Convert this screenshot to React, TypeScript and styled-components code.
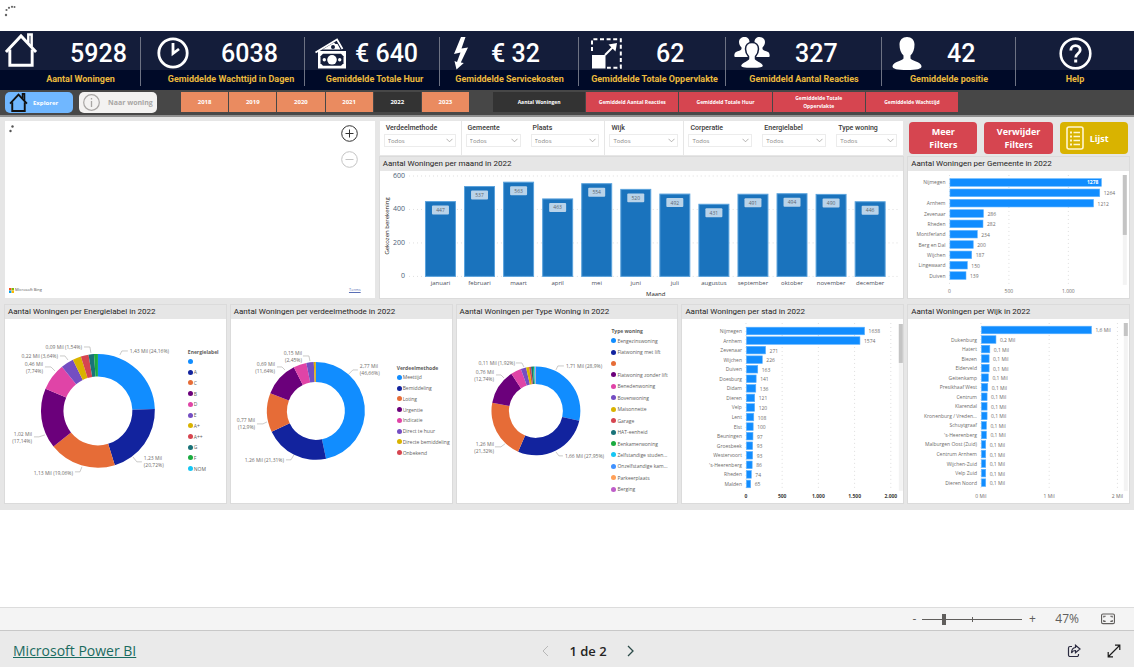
import React from 'react';
import styled, { createGlobalStyle } from 'styled-components';

const sans = '"Open Sans", "Noto Sans", sans-serif';
const din = 'Roboto, "Liberation Sans", sans-serif';

const GlobalStyle = createGlobalStyle`
  *, *::before, *::after { box-sizing: border-box; }
  body { margin: 0; background: #ffffff; font-family: ${sans}; color: #252423; }
  button, select, input { font: inherit; color: inherit; margin: 0; padding: 0; border: 0; }
  button { cursor: pointer; }
  h2, h3, p, ul { margin: 0; padding: 0; font-weight: 400; }
  ul { list-style: none; }
`;

/* ---------- page frame ---------- */

const Page = styled.div`
  min-height: 100vh;
  display: flex;
  flex-direction: column;
`;

const LoadingStrip = styled.div`
  height: 31px;
  padding: 2px 4px;
`;

const Blank = styled.div`
  flex: 1;
  min-height: 20px;
`;

/* ---------- KPI header ---------- */

const KpiBar = styled.header`
  display: grid;
  grid-template-columns: 141fr 164fr 135fr 139fr 147fr 156fr 134fr 118fr;
  height: 59px;
  background: linear-gradient(#141d3a 0 39px, #000a28 39px);
`;

const KpiCell = styled.div<{ $divider: boolean }>`
  position: relative;
  min-width: 0;
  padding-top: 5px;
  &::after {
    content: '';
    display: ${p => (p.$divider ? 'block' : 'none')};
    position: absolute;
    right: 0;
    top: 6px;
    width: 1px;
    height: 49px;
    background: #6d7283;
  }
`;

const KpiTop = styled.div<{ $lead: number; $gap: number; $raise?: boolean }>`
  display: flex;
  align-items: center;
  height: 36px;
  padding-left: ${p => p.$lead}px;
  gap: ${p => p.$gap}px;
  svg { flex: none; display: block; margin-bottom: ${p => (p.$raise ? 8 : 2)}px; }
`;

const KpiValue = styled.span`
  font: 500 25px/36px ${din};
  color: #ffffff;
  white-space: nowrap;
`;

const KpiLabel = styled.p<{ $indent: number }>`
  padding-left: ${p => p.$indent}px;
  font: 700 9px/14px ${din};
  color: #ecba3e;
  text-align: center;
  white-space: nowrap;
`;

/* ---------- toolbar ---------- */

const Toolbar = styled.nav`
  display: grid;
  grid-template-columns: 68fr 78fr 306fr 483fr 165fr;
  column-gap: 6px;
  height: 27px;
  padding: 2px 5px 3px;
  background: #474747;
  border-bottom: 2px solid #8f8f8f;
`;

const NavButton = styled.button<{ $tone: 'blue' | 'light' }>`
  display: flex;
  align-items: center;
  gap: ${p => (p.$tone === 'blue' ? 5 : 8)}px;
  height: 21px;
  padding-left: 4px;
  border-radius: 5px;
  background: ${p => (p.$tone === 'blue' ? '#70b7ff' : '#f3f2f1')};
  color: ${p => (p.$tone === 'blue' ? '#ffffff' : '#a8a6a4')};
  font-size: ${p => (p.$tone === 'blue' ? 6 : 7)}px;
  font-weight: 700;
  white-space: nowrap;
  svg { flex: none; }
`;

const TileGroup = styled.div`
  display: flex;
  gap: 1px;
  height: 20px;
  padding-left: 18px;
`;

const Tile = styled.button<{ $tone: 'orange' | 'red'; $active?: boolean }>`
  flex: 1 1 0;
  min-width: 0;
  padding: 0 8px;
  background: ${p => (p.$active ? '#333333' : p.$tone === 'orange' ? '#ea8b60' : '#d64550')};
  color: #ffffff;
  font-size: ${p => (p.$tone === 'orange' ? 6 : 5)}px;
  line-height: 8px;
  font-weight: 700;
`;

/* ---------- report grid ---------- */

const Report = styled.main`
  background: #e6e6e6;
  padding: 4px 5px 7px;
`;

const UpperRow = styled.div`
  display: grid;
  grid-template-columns: 370fr 524fr 221fr;
  gap: 5px;
  margin-bottom: 7px;
`;

const LowerRow = styled.div`
  display: grid;
  grid-template-columns: repeat(5, minmax(0, 1fr));
  gap: 5px;
`;

const Stack = styled.div`
  display: flex;
  flex-direction: column;
  gap: 2px;
  min-width: 0;
`;

const Panel = styled.section`
  min-width: 0;
  box-shadow: 0 0 0 1px #dbdbdb;
`;

const PanelTitle = styled.h3`
  padding-left: 3px;
  font: 400 8px/14px ${din};
  color: #252423;
  white-space: nowrap;
`;

const PanelBody = styled.div`
  background: #ffffff;
  svg { display: block; width: 100%; height: auto; }
`;

/* ---------- map ---------- */

const MapPanel = styled.section`
  display: flex;
  flex-direction: column;
  justify-content: space-between;
  min-height: 177px;
  padding: 4px 14px 4px 4px;
  background: #ffffff;
`;

const MapLine = styled.div`
  display: flex;
  justify-content: space-between;
  align-items: flex-start;
  font-size: 4px;
  line-height: 8px;
  color: #555555;
`;

const MapControls = styled.div`
  display: flex;
  flex-direction: column;
  gap: 9px;
  margin-right: 3px;
`;

const RoundButton = styled.button`
  display: block;
  width: 17px;
  height: 17px;
  background: none;
  svg { display: block; }
`;

const BingMark = styled.span`
  display: flex;
  align-items: center;
  gap: 1px;
`;

const TermsLink = styled.a`
  color: #5a6fb5;
`;

/* ---------- slicers ---------- */

const Slicers = styled.div`
  display: grid;
  grid-template-columns: 82fr 65fr 79fr 79fr 74fr 74fr 71fr;
  height: 34px;
  background: #ffffff;
`;

const Slicer = styled.label<{ $edge?: boolean }>`
  position: relative;
  display: block;
  min-width: 0;
  padding: 2px 5px 0 4px;
  border-right: 1px solid ${p => (p.$edge ? '#e6e6e6' : '#ffffff')};
  font: 500 7px/10px ${din};
  color: #3b3a39;
  white-space: nowrap;
  span { display: block; padding-left: 2px; }
`;

const SlicerSelect = styled.select`
  display: block;
  width: 100%;
  height: 13px;
  margin-top: 1px;
  padding-left: 3px;
  appearance: none;
  border: 1px solid #ececec;
  background: #ffffff;
  font-family: ${sans};
  font-size: 6px;
  line-height: 10px;
  color: #8a8886;
`;

const SlicerChevron = styled.svg`
  position: absolute;
  right: 8px;
  top: 17px;
  pointer-events: none;
`;

/* ---------- action buttons ---------- */

const Actions = styled.div`
  display: grid;
  grid-template-columns: repeat(3, 1fr);
  gap: 7px;
  height: 34px;
  padding: 1px;
`;

const ActionButton = styled.button<{ $gold?: boolean }>`
  display: flex;
  align-items: center;
  justify-content: ${p => (p.$gold ? 'flex-start' : 'center')};
  gap: 6px;
  padding-left: ${p => (p.$gold ? 6 : 0)}px;
  border-radius: 4px;
  background: ${p => (p.$gold ? '#d9b300' : '#d64550')};
  color: #ffffff;
  font-size: 9px;
  line-height: 13px;
  font-weight: 700;
`;

/* ---------- donut layout ---------- */

const DonutBody = styled.div<{ $plot: number }>`
  display: grid;
  grid-template-columns: ${p => p.$plot}fr ${p => 221 - p.$plot}fr;
  align-items: center;
  min-height: 184px;
  background: #ffffff;
  > svg { display: block; width: 100%; height: auto; }
`;

const LegendTitle = styled.p`
  font-size: 5px;
  line-height: 8px;
  font-weight: 700;
  color: #605e5c;
  white-space: nowrap;
`;

const LegendList = styled.ul<{ $height: number }>`
  display: flex;
  flex-direction: column;
  height: ${p => p.$height}px;
`;

const LegendItem = styled.li<{ $color: string }>`
  flex: 1;
  display: flex;
  align-items: center;
  gap: 1px;
  font-size: 5px;
  line-height: 8px;
  color: #605e5c;
  white-space: nowrap;
  &::before {
    content: '';
    flex: none;
    width: 5px;
    height: 5px;
    border-radius: 50%;
    background: ${p => p.$color};
  }
`;

/* ---------- bottom bars ---------- */

const ZoomBar = styled.div`
  display: flex;
  align-items: center;
  justify-content: flex-end;
  height: 24px;
  padding-right: 19px;
  border-top: 1px solid #dcdcdc;
  border-bottom: 1px solid #c8c8c8;
  background: #f4f4f4;
  color: #605e5c;
  font-size: 12px;
  line-height: 22px;
`;

const ZoomStep = styled.button`
  width: 10px;
  background: none;
  text-align: center;
`;

const ZoomRange = styled.input`
  width: 100px;
  height: 12px;
  margin: 0 5px 0 3px;
  appearance: none;
  background:
    linear-gradient(#605e5c, #605e5c) 50px 50% / 1px 5px no-repeat,
    linear-gradient(#605e5c, #605e5c) 0 50% / 100% 1px no-repeat;
  &::-webkit-slider-thumb {
    appearance: none;
    width: 4px;
    height: 11px;
    background: #605e5c;
  }
`;

const ZoomValue = styled.span`
  margin: 0 22px 0 18px;
`;

const IconButton = styled.button`
  display: block;
  background: none;
  svg { display: block; }
`;

const Footer = styled.footer`
  display: grid;
  grid-template-columns: 1fr auto 1fr;
  align-items: center;
  height: 36px;
  padding: 4px 13px 0;
  background: #eaeaea;
`;

const BrandLink = styled.a`
  justify-self: start;
  font-size: 14px;
  line-height: 18px;
  color: #1a6b60;
`;

const Pager = styled.div`
  display: flex;
  align-items: center;
  gap: 20px;
  margin-left: 42px;
  font-size: 13px;
  font-weight: 600;
  line-height: 18px;
`;

const FooterTools = styled.div`
  display: flex;
  justify-content: flex-end;
  gap: 26px;
`;

/* ---------- icons ---------- */

const HouseIcon = ({ size, color, stroke }: { size: number; color: string; stroke: number }) => (
  <svg width={size} height={size} viewBox="0 0 34 35" fill="none" stroke={color} strokeWidth={stroke} aria-hidden="true">
    <path d="M1.500 19.500 17 3l15.500 16.500" />
    <path d="M5.500 17v16.200h23V17" />
    <path d="M24.500 10V1.500h3.500V14" strokeWidth={stroke - 0.500} />
  </svg>
);

const ClockIcon = () => (
  <svg width="32" height="32" viewBox="0 0 32 32" fill="none" stroke="#fff" aria-hidden="true">
    <circle cx="16" cy="16" r="14.200" strokeWidth="2.800" />
    <path d="M16 6v10.500l6-4.500" strokeWidth="2.800" />
  </svg>
);

const MoneyIcon = () => (
  <svg width="32" height="31" viewBox="0 0 32 31" aria-hidden="true">
    <path d="M1.500 14.500 23 1.500l5.500 9.500" fill="none" stroke="#fff" strokeWidth="1.800" />
    <path d="M7 12.500 20 4.500l1.500 1.500h2l3 5.500H9z" fill="#fff" />
    <circle cx="19" cy="9" r="2" fill="#141d3a" />
    <path d="M4 13h28v17.500H4z" fill="#fff" />
    <path d="M9 15.800h18l2.500 2.500v7L27 27.700H9l-2.500-2.400v-7z" fill="#141d3a" />
    <circle cx="18" cy="21.800" r="4.800" fill="#fff" />
    <circle cx="10.300" cy="21.800" r="1.700" fill="#fff" />
    <circle cx="25.700" cy="21.800" r="1.700" fill="#fff" />
  </svg>
);

const BoltIcon = () => (
  <svg width="16" height="33" viewBox="0 0 16 33" aria-hidden="true">
    <path d="M8 0h4.500L8.500 11.500l6.500-1L7.800 25.500l3 .5L3.500 32.500 1.500 24l2.500 1 3.500-9.500L1 17z" fill="#fff" />
  </svg>
);

const AreaIcon = () => (
  <svg width="31" height="31" viewBox="0 0 31 31" fill="none" stroke="#fff" aria-hidden="true">
    <path d="M1 13V1.200h28.800v28.600H16" strokeWidth="2" strokeDasharray="4 2.600" />
    <path d="M1 17h13.500v13.500H1z" fill="#fff" stroke="none" />
    <path d="M14 17 24 7" strokeWidth="2" />
    <path d="M17.500 6.500 26 5l-1.500 8.500z" fill="#fff" stroke="none" />
  </svg>
);

const GroupIcon = () => (
  <svg width="36" height="32" viewBox="0 0 36 32" fill="#fff" aria-hidden="true">
    <path d="M10.500 0c3 0 5 2 5 5 0 2.500-.8 4.500-2 6v2c2 1.500 4 2 5 3.500v3.500H1c-1 0-1-4 1-5 2-1 5-1.500 5.500-3v-1.500C6 9 5 7 5 5c0-3 2.500-5 5.500-5z" />
    <path d="M25.500 0c3 0 5.500 2 5.500 5 0 2-1 4-2.500 5.500V12c.5 1.500 3.500 2 5.500 3s2 5 1 5H18v-4l4.500-3v-2c-1.200-1.500-2-3.500-2-6 0-3 2-5 5-5z" />
    <path
      d="M18 5.500c4 0 6.500 2.800 6.500 6.500 0 3-1.300 5.500-3 7.500v2.500c1 2 7.500 2.500 8 6.500.3 2.500-4 3-11.500 3s-11.800-.5-11.500-3c.5-4 7-4.500 8-6.500v-2.500c-1.700-2-3-4.500-3-7.500 0-3.700 2.500-6.500 6.500-6.500z"
      stroke="#141d3a"
      strokeWidth="1.500"
    />
  </svg>
);

const PersonIcon = () => (
  <svg width="30" height="33" viewBox="0 0 30 33" fill="#fff" aria-hidden="true">
    <path d="M15 0c4.500 0 7.500 3 7.500 7.500 0 5-1.500 8.500-4 11v3c1 2.500 10 3 11 7.500.5 3-5 4-14.500 4S.1 32 .5 29c1-4.500 10-5 11-7.500v-3c-2.500-2.500-4-6-4-11C7.500 3 10.500 0 15 0z" />
  </svg>
);

const HelpIcon = () => (
  <svg width="33" height="33" viewBox="0 0 33 33" fill="none" stroke="#fff" aria-hidden="true">
    <circle cx="16.500" cy="16.500" r="14.800" strokeWidth="2.600" />
    <path d="M11.800 13.500c0-3 2-4.800 4.700-4.800s4.700 1.700 4.700 4.200c0 3.600-4.500 3.600-4.500 7.600" strokeWidth="2.800" />
    <path d="M15.200 22.500h3v3h-3z" fill="#fff" stroke="none" />
  </svg>
);

const InfoIcon = () => (
  <svg width="17" height="17" viewBox="0 0 17 17" fill="none" stroke="#a8a6a4" aria-hidden="true">
    <circle cx="8.500" cy="8.500" r="7.800" strokeWidth="1.200" />
    <path d="M8.500 7v6M8.500 4v1.500" strokeWidth="1.300" />
  </svg>
);

const ListIcon = () => (
  <svg width="18" height="24" viewBox="0 0 18 24" fill="none" stroke="#fff6cf" aria-hidden="true">
    <rect x="1" y="1" width="16" height="22" rx="2" strokeWidth="1.600" />
    <path d="M7.500 6.500h6.500M7.500 10.500h6.500M7.500 14.500h6.500M7.500 18.500h6.500" strokeWidth="1.500" />
    <path d="M4 6.500h2M4 10.500h2M4 14.500h2M4 18.500h2" strokeWidth="1.800" />
  </svg>
);

/* ---------- data ---------- */

const kpis = [
  { icon: <HouseIcon size={34} color="#fff" stroke={3} />, value: '5928', label: 'Aantal Woningen', lead: 4, gap: 32, indent: 20, raise: true },
  { icon: <ClockIcon />, value: '6038', label: 'Gemiddelde Wachttijd in Dagen', lead: 16, gap: 32, indent: 16 },
  { icon: <MoneyIcon />, value: '€ 640', label: 'Gemiddelde Totale Huur', lead: 9, gap: 9, indent: 4 },
  { icon: <BoltIcon />, value: '€ 32', label: 'Gemiddelde Servicekosten', lead: 13, gap: 22, indent: 0 },
  { icon: <AreaIcon />, value: '62', label: 'Gemiddelde Totale Oppervlakte', lead: 12, gap: 34, indent: 4 },
  { icon: <GroupIcon />, value: '327', label: 'Gemiddeld Aantal Reacties', lead: 8, gap: 25, indent: 0 },
  { icon: <PersonIcon />, value: '42', label: 'Gemiddelde positie', lead: 10, gap: 25, indent: 0 },
  { icon: <HelpIcon />, value: '', label: 'Help', lead: 43, gap: 0, indent: 0 },
];

const years = ['2018', '2019', '2020', '2021', '2022', '2023'];

const metrics = [
  'Aantal Woningen',
  'Gemiddeld Aantal Reacties',
  'Gemiddeld Totale Huur',
  'Gemiddelde Totale Oppervlakte',
  'Gemiddelde Wachttijd',
];

const slicers = ['Verdeelmethode', 'Gemeente', 'Plaats', 'Wijk', 'Corperatie', 'Energielabel', 'Type woning'];
const edged = ['Verdeelmethode', 'Plaats', 'Wijk'];

const months: [string, number][] = [
  ['januari', 447], ['februari', 537], ['maart', 563], ['april', 463], ['mei', 554], ['juni', 520],
  ['juli', 492], ['augustus', 431], ['september', 491], ['oktober', 494], ['november', 490], ['december', 446],
];

type Bar = [string, number, string];

const gemeenten: Bar[] = [
  ['Nijmegen', 1278, '1278'], ['', 1264, '1264'], ['Arnhem', 1212, '1212'], ['Zevenaar', 286, '286'],
  ['Rheden', 282, '282'], ['Montferland', 234, '234'], ['Berg en Dal', 200, '200'], ['Wijchen', 187, '187'],
  ['Lingewaard', 150, '150'], ['Duiven', 139, '139'],
];

const steden: Bar[] = [
  ['Nijmegen', 1638, '1638'], ['Arnhem', 1574, '1574'], ['Zevenaar', 271, '271'], ['Wijchen', 226, '226'],
  ['Duiven', 163, '163'], ['Doesburg', 141, '141'], ['Didam', 136, '136'], ['Dieren', 121, '121'],
  ['Velp', 120, '120'], ['Lent', 108, '108'], ['Elst', 100, '100'], ['Beuningen', 97, '97'],
  ['Groesbeek', 93, '93'], ['Westervoort', 93, '93'], ["'s-Heerenberg", 86, '86'], ['Rheden', 74, '74'],
  ['Malden', 65, '65'],
];

const wijken: Bar[] = [
  ['', 1.62, '1,6 Mil'], ['Dukenburg', 0.22, '0,2 Mil'], ['Hatert', 0.13, '0,1 Mil'], ['Biezen', 0.12, '0,1 Mil'],
  ['Elderveld', 0.12, '0,1 Mil'], ['Geitenkamp', 0.11, '0,1 Mil'], ['Presikhaaf West', 0.1, '0,1 Mil'],
  ['Centrum', 0.09, '0,1 Mil'], ['Klarendal', 0.09, '0,1 Mil'], ['Kronenburg / Vreden...', 0.09, '0,1 Mil'],
  ['Schuytgraaf', 0.08, '0,1 Mil'], ["'s-Heerenberg", 0.08, '0,1 Mil'], ['Malburgen Oost (Zuid)', 0.07, '0,1 Mil'],
  ['Centrum Arnhem', 0.07, '0,1 Mil'], ['Wijchen-Zuid', 0.07, '0,1 Mil'], ['Velp Zuid', 0.07, '0,1 Mil'],
  ['Dieren Noord', 0.07, '0,1 Mil'],
];

/* ---------- charts ---------- */

const AXIS = '#6e6c6a';

function MonthChart() {
  const base = 105.5;
  const unit = 0.1675;
  return (
    <svg viewBox="0 0 524 127" fontFamily={sans} role="img" aria-label="Aantal Woningen per maand">
      {[0, 200, 400, 600].map(v => (
        <g key={v}>
          <line x1="29" x2="521" y1={base - v * unit} y2={base - v * unit} stroke="#dedede" strokeDasharray="1 3" />
          <text x="25" y={base - v * unit + 2} fontSize="7" fill="#4d5f78" textAnchor="end">{v}</text>
        </g>
      ))}
      {months.map(([name, v], i) => {
        const x = 45.5 + i * 39.1;
        const top = base - v * unit;
        return (
          <g key={name}>
            <rect x={x} y={top} width="30" height={v * unit} fill="#1a73bd" stroke="#5aa2dc" strokeWidth="1" />
            <rect x={x + 6.500} y={top + 4} width="17" height="9" rx="1" fill="#b9d3e9" />
            <text x={x + 15} y={top + 10.500} fontSize="5" fill="#5c6670" textAnchor="middle">{v}</text>
            <text x={x + 15} y="114" fontSize="6" fill="#4a4f5c" textAnchor="middle">{name}</text>
          </g>
        );
      })}
      <text x="276" y="125" fontSize="6" fill="#252423" textAnchor="middle">Maand</text>
      <text transform="translate(9 55) rotate(-90)" fontSize="6" fill="#252423" textAnchor="middle">Gekozen berekening</text>
    </svg>
  );
}

interface BarChartProps {
  name: string;
  bars: Bar[];
  height: number;
  start: number;
  unit: number;
  first: number;
  pitch: number;
  ticks: [number, string][];
  boldAxis?: boolean;
  insideFirst?: boolean;
  scroll: { x: number; top: number; thumb: number; track: number };
}

function BarChart({ name: chartName, bars, height, start, unit, first, pitch, ticks, boldAxis, insideFirst, scroll }: BarChartProps) {
  return (
    <svg viewBox={`0 0 221 ${height}`} fontFamily={sans} fontSize="5" role="img" aria-label={chartName}>
      {ticks.map(([v, label]) => (
        <g key={label}>
          <line x1={start + v * unit} x2={start + v * unit} y1="4" y2={height - 13} stroke="#dedede" strokeDasharray="1 3" />
          <text x={start + v * unit} y={height - 5} fontWeight={boldAxis ? 700 : 400} fill={boldAxis ? '#3b3a39' : AXIS} textAnchor="middle">
            {label}
          </text>
        </g>
      ))}
      {bars.map(([name, v, label], i) => {
        const y = first + i * pitch;
        const inside = insideFirst && i === 0;
        return (
          <g key={i}>
            <text x={start - 4} y={y + 2} fill={AXIS} textAnchor="end">{name}</text>
            <rect x={start + 0.500} y={y - 3.800} width={v * unit - 0.500} height="7.600" fill="#118dff" stroke="#5db2ff" strokeWidth=".6" />
            <text
              x={start + v * unit + (inside ? -3 : 4)}
              y={y + (inside ? 2 : 2.500)}
              fill={inside ? '#ffffff' : AXIS}
              fontWeight={inside ? 700 : 400}
              textAnchor={inside ? 'end' : 'start'}
            >
              {label}
            </text>
          </g>
        );
      })}
      <rect x={scroll.x} y={scroll.top} width="4" height={scroll.track} fill="#f3f3f3" />
      <rect x={scroll.x} y={scroll.top} width="4" height={scroll.thumb} fill="#c4c4c4" />
    </svg>
  );
}

interface Callout {
  x: number;
  y: number;
  end?: boolean;
  lines: string[];
  path: string;
}

interface DonutProps {
  name: string;
  plot: number;
  cx: number;
  outer: number;
  inner: number;
  slices: [string, number, string][];
  callouts: Callout[];
  listHeight: number;
}

function ring(cx: number, cy: number, R: number, r: number, from: number, to: number) {
  const at = (radius: number, t: number) => {
    const a = t * Math.PI * 2;
    return `${(cx + radius * Math.sin(a)).toFixed(2)} ${(cy - radius * Math.cos(a)).toFixed(2)}`;
  };
  const big = to - from > 0.5 ? 1 : 0;
  return `M${at(R, from)}A${R} ${R} 0 ${big} 1 ${at(R, to)}L${at(r, to)}A${r} ${r} 0 ${big} 0 ${at(r, from)}Z`;
}

function Donut({ name, plot, cx, outer, inner, slices, callouts, listHeight }: DonutProps) {
  const total = slices.reduce((sum, s) => sum + s[1], 0);
  let acc = 0;
  return (
    <DonutBody $plot={plot}>
      <svg viewBox={`0 0 ${plot} 184`} fontFamily={sans} fontSize="5" role="img" aria-label={name}>
        {slices.map(([label, v, color]) => {
          const from = acc / total;
          acc += v;
          return v > 0 ? <path key={label} d={ring(cx, 92, outer, inner, from, acc / total)} fill={color} /> : null;
        })}
        {callouts.map(c => (
          <g key={c.path}>
            <path d={c.path} fill="none" stroke="#b5b3b1" strokeWidth=".7" />
            {c.lines.map((line, i) => (
              <text key={line} x={c.x} y={c.y + 2 + i * 7.500} fill={AXIS} textAnchor={c.end ? 'end' : 'start'}>{line}</text>
            ))}
          </g>
        ))}
      </svg>
      <div>
        <LegendTitle>{name}</LegendTitle>
        <LegendList $height={listHeight}>
          {slices.map(([label, , color]) => (
            <LegendItem key={label} $color={color}>{label}</LegendItem>
          ))}
        </LegendList>
      </div>
    </DonutBody>
  );
}

const P = ['#118dff', '#12239e', '#e66c37', '#6b007b', '#e044a7', '#744ec2', '#d9b300', '#d64550', '#197278', '#1aab40', '#15c6f4', '#4092ff', '#ffa058', '#be5dc9'];

const energie: DonutProps = {
  name: 'Energielabel', plot: 183, cx: 93, outer: 57, inner: 34.5, listHeight: 118,
  slices: [
    ['', 24.5, P[0]], ['A', 20.72, P[1]], ['C', 19.06, P[2]], ['B', 17.14, P[3]], ['D', 7.74, P[4]], ['E', 3.64, P[5]],
    ['A+', 2.4, P[6]], ['A++', 2.2, P[7]], ['G', 1.54, P[8]], ['F', 1.1, P[9]], ['NOM', 0, P[10]],
  ],
  callouts: [
    { x: 125, y: 32, lines: ['1,43 Mil (24,16%)'], path: 'M115 36l2-4h6' },
    { x: 77, y: 28, end: true, lines: ['0,09 Mil (1,54%)'], path: 'M79 28h6l1 6' },
    { x: 53, y: 37, end: true, lines: ['0,22 Mil (3,64%)'], path: 'M55 37h5l3 4' },
    { x: 38, y: 45, end: true, lines: ['0,46 Mil', '(7,74%)'], path: 'M40 48h6l4 4' },
    { x: 27, y: 115, end: true, lines: ['1,02 Mil', '(17,14%)'], path: 'M29 118h5l6-2' },
    { x: 68, y: 154, end: true, lines: ['1,13 Mil (19,06%)'], path: 'M70 153h5l2-5' },
    { x: 139, y: 139, lines: ['1,23 Mil', '(20,72%)'], path: 'M128 138l4 5h5' },
  ],
};

const methode: DonutProps = {
  name: 'Verdeelmethode', plot: 166, cx: 85, outer: 49, inner: 29, listHeight: 86,
  slices: [
    ['Meettijd', 46.66, P[0]], ['Bemiddeling', 21.31, P[1]], ['Loting', 12.9, P[2]], ['Urgentie', 11.64, P[3]],
    ['Indicatie', 4.3, P[4]], ['Direct te huur', 2.45, P[5]], ['Directe bemiddeling', 0.65, P[6]], ['Onbekend', 0.05, P[7]],
  ],
  callouts: [
    { x: 129, y: 47, lines: ['2,77 Mil', '(46,66%)'], path: 'M118 55l4-4h5' },
    { x: 71, y: 34, end: true, lines: ['0,15 Mil', '(2,45%)'], path: 'M72 37h6l1 5' },
    { x: 44, y: 45, end: true, lines: ['0,69 Mil', '(11,64%)'], path: 'M46 48h5l3 3' },
    { x: 24, y: 101, end: true, lines: ['0,77 Mil', '(12,9%)'], path: 'M26 105h6l4-2' },
    { x: 53, y: 141, end: true, lines: ['1,26 Mil (21,31%)'], path: 'M55 141h5l3-5' },
  ],
};

const type: DonutProps = {
  name: 'Type woning', plot: 155, cx: 79, outer: 44.5, inner: 27, listHeight: 160,
  slices: [
    ['Eengezinswoning', 28.5, P[0]], ['Flatwoning met lift', 27.95, P[1]], ['', 21.32, P[2]], ['Flatwoning zonder lift', 12.74, P[3]],
    ['Benedenwoning', 3.8, P[4]], ['Bovenwoning', 1.92, P[5]], ['Maisonnette', 1.1, P[6]], ['Garage', 0.7, P[7]],
    ['HAT-eenheid', 0.7, P[8]], ['Eenkamerwoning', 0.4, P[9]], ['Zelfstandige studen...', 0.3, P[10]],
    ['Onzelfstandige kam...', 0.2, P[11]], ['Parkeerplaats', 0.1, P[12]], ['Berging', 0.07, P[13]],
  ],
  callouts: [
    { x: 109, y: 47, lines: ['1,71 Mil (28,9%)'], path: 'M99 51l2-4h6' },
    { x: 58, y: 44, end: true, lines: ['0,11 Mil (1,92%)'], path: 'M59 44h6l2 4' },
    { x: 37, y: 53, end: true, lines: ['0,76 Mil', '(12,74%)'], path: 'M39 56h5l3 3' },
    { x: 37, y: 125, end: true, lines: ['1,26 Mil', '(21,32%)'], path: 'M38 128h6l4-3' },
    { x: 108, y: 137, lines: ['1,66 Mil (27,95%)'], path: 'M99 133l3 4h4' },
  ],
};

/* ---------- page ---------- */

export default function App() {
  return (
    <Page>
      <GlobalStyle />
      <LoadingStrip>
        <svg width="14" height="14" viewBox="0 0 14 14" fill="#666" aria-hidden="true">
          <circle cx="2" cy="10" r="1.200" /><circle cx="2.500" cy="5" r="1.100" /><circle cx="5" cy="2.800" r="1.100" />
          <circle cx="8" cy="1.800" r="1.100" /><circle cx="10.500" cy="2" r="1" />
        </svg>
      </LoadingStrip>

      <KpiBar>
        {kpis.map((k, i) => (
          <KpiCell key={k.label} $divider={i < kpis.length - 1}>
            <KpiTop $lead={k.lead} $gap={k.gap} $raise={k.raise}>
              {k.icon}
              {k.value && <KpiValue>{k.value}</KpiValue>}
            </KpiTop>
            <KpiLabel $indent={k.indent}>{k.label}</KpiLabel>
          </KpiCell>
        ))}
      </KpiBar>

      <Toolbar>
        <NavButton $tone="blue"><HouseIcon size={19} color="#111" stroke={3.5} />Explorer</NavButton>
        <NavButton $tone="light"><InfoIcon />Naar woning</NavButton>
        <TileGroup>
          {years.map(y => <Tile key={y} $tone="orange" $active={y === '2022'}>{y}</Tile>)}
        </TileGroup>
        <TileGroup>
          {metrics.map((m, i) => <Tile key={m} $tone="red" $active={i === 0}>{m}</Tile>)}
        </TileGroup>
      </Toolbar>

      <Report>
        <UpperRow>
          <MapPanel>
            <MapLine>
              <svg width="8" height="8" viewBox="0 0 8 8" fill="#555" aria-hidden="true">
                <circle cx="3.500" cy="1.500" r="1.200" /><circle cx="1.500" cy="6" r="1.200" />
              </svg>
              <MapControls>
                <RoundButton aria-label="Inzoomen">
                  <svg width="17" height="17" viewBox="0 0 17 17" fill="none" stroke="#333">
                    <circle cx="8.500" cy="8.500" r="7.800" /><path d="M4.500 8.500h8M8.500 4.500v8" />
                  </svg>
                </RoundButton>
                <RoundButton aria-label="Uitzoomen">
                  <svg width="17" height="17" viewBox="0 0 17 17" fill="none" stroke="#c4c4c4">
                    <circle cx="8.500" cy="8.500" r="7.800" /><path d="M4.500 8.500h8" />
                  </svg>
                </RoundButton>
              </MapControls>
            </MapLine>
            <MapLine>
              <BingMark>
                <svg width="5" height="5" viewBox="0 0 5 5" aria-hidden="true">
                  <path d="M0 0h2.400v2.400H0z" fill="#f25022" /><path d="M2.600 0H5v2.400H2.600z" fill="#7fba00" />
                  <path d="M0 2.600h2.400V5H0z" fill="#00a4ef" /><path d="M2.600 2.600H5V5H2.600z" fill="#ffb900" />
                </svg>
                Microsoft Bing
              </BingMark>
              <TermsLink href="#terms">Terms</TermsLink>
            </MapLine>
          </MapPanel>

          <Stack>
            <Slicers>
              {slicers.map(s => (
                <Slicer key={s} $edge={edged.includes(s)}>
                  <span>{s}</span>
                  <SlicerSelect defaultValue="Todos"><option>Todos</option></SlicerSelect>
                  <SlicerChevron width="7" height="5" viewBox="0 0 7 5" fill="none" stroke="#a19f9d" strokeWidth=".8">
                    <path d="M.5.800l3 3 3-3" />
                  </SlicerChevron>
                </Slicer>
              ))}
            </Slicers>
            <Panel>
              <PanelTitle>Aantal Woningen per maand in 2022</PanelTitle>
              <PanelBody><MonthChart /></PanelBody>
            </Panel>
          </Stack>

          <Stack>
            <Actions>
              <ActionButton>Meer<br />Filters</ActionButton>
              <ActionButton>Verwijder<br />Filters</ActionButton>
              <ActionButton $gold><ListIcon />Lijst</ActionButton>
            </Actions>
            <Panel>
              <PanelTitle>Aantal Woningen per Gemeente in 2022</PanelTitle>
              <PanelBody>
                <BarChart
                  name="Aantal Woningen per Gemeente"
                  bars={gemeenten} height={127} start={41.5} unit={0.119} first={11.5} pitch={10.35} insideFirst
                  ticks={[[0, '0'], [500, '500'], [1000, '1.000']]}
                  scroll={{ x: 215, top: 4, thumb: 60, track: 110 }}
                />
              </PanelBody>
            </Panel>
          </Stack>
        </UpperRow>

        <LowerRow>
          <Panel>
            <PanelTitle>Aantal Woningen per Energielabel in 2022</PanelTitle>
            <Donut {...energie} />
          </Panel>
          <Panel>
            <PanelTitle>Aantal Woningen per verdeelmethode in 2022</PanelTitle>
            <Donut {...methode} />
          </Panel>
          <Panel>
            <PanelTitle>Aantal Woningen per Type Woning in 2022</PanelTitle>
            <Donut {...type} />
          </Panel>
          <Panel>
            <PanelTitle>Aantal Woningen per stad in 2022</PanelTitle>
            <PanelBody>
              <BarChart
                name="Aantal Woningen per stad"
                bars={steden} height={184} start={64} unit={0.0725} first={12} pitch={9.57} boldAxis
                ticks={[[0, '0'], [500, '500'], [1000, '1.000'], [1500, '1.500'], [2000, '2.000']]}
                scroll={{ x: 217, top: 5, thumb: 39, track: 167 }}
              />
            </PanelBody>
          </Panel>
          <Panel>
            <PanelTitle>Aantal Woningen per Wijk in 2022</PanelTitle>
            <PanelBody>
              <BarChart
                name="Aantal Woningen per Wijk"
                bars={wijken} height={184} start={73} unit={68.3} first={11} pitch={9.55}
                ticks={[[0, '0 Mil'], [1, '1 Mil'], [2, '2 Mil']]}
                scroll={{ x: 216, top: 4, thumb: 13, track: 168 }}
              />
            </PanelBody>
          </Panel>
        </LowerRow>
      </Report>

      <Blank />

      <ZoomBar>
        <ZoomStep aria-label="Uitzoomen">-</ZoomStep>
        <ZoomRange type="range" min="0" max="100" defaultValue="20" aria-label="Zoomniveau" />
        <ZoomStep aria-label="Inzoomen">+</ZoomStep>
        <ZoomValue>47%</ZoomValue>
        <IconButton aria-label="Aanpassen aan pagina">
          <svg width="14" height="12" viewBox="0 0 15 12" fill="none" stroke="#605e5c" strokeWidth="1.200">
            <rect x=".6" y=".6" width="13.800" height="10.300" rx="1.500" />
            <path d="M3 4.500V3h2M10 3h2v1.500M12 7v1.500h-2M5 8.500H3V7" />
          </svg>
        </IconButton>
      </ZoomBar>
      <Footer>
        <BrandLink href="#powerbi">Microsoft Power BI</BrandLink>
        <Pager>
          <IconButton aria-label="Vorige pagina">
            <svg width="7" height="12" viewBox="0 0 7 12" fill="none" stroke="#b8b8b8"><path d="M6 1 1 6l5 5" /></svg>
          </IconButton>
          <span>1 de 2</span>
          <IconButton aria-label="Volgende pagina">
            <svg width="7" height="12" viewBox="0 0 7 12" fill="none" stroke="#2b4a48" strokeWidth="1.300"><path d="M1 1l5 5-5 5" /></svg>
          </IconButton>
        </Pager>
        <FooterTools>
          <IconButton aria-label="Delen">
            <svg width="14" height="14" viewBox="0 0 14 14" fill="none" stroke="#2b2b40" strokeWidth="1.200">
              <path d="M5 2.500H3A1.500 1.500 0 0 0 1.500 4v7A1.500 1.500 0 0 0 3 12.500h7a1.500 1.500 0 0 0 1.500-1.500v-1" />
              <path d="M8.500 1.200 13 5 8.500 8.800V6.500C6.500 6.500 5.200 7.500 4.500 9c0-3 1.500-5.200 4-5.500z" />
            </svg>
          </IconButton>
          <IconButton aria-label="Volledig scherm">
            <svg width="14" height="14" viewBox="0 0 14 14" fill="none" stroke="#1b1b1b" strokeWidth="1.200">
              <path d="M1.500 12.500l11-11M8 1.200h4.800V6M1.200 8v4.800H6" />
            </svg>
          </IconButton>
        </FooterTools>
      </Footer>
    </Page>
  );
}
